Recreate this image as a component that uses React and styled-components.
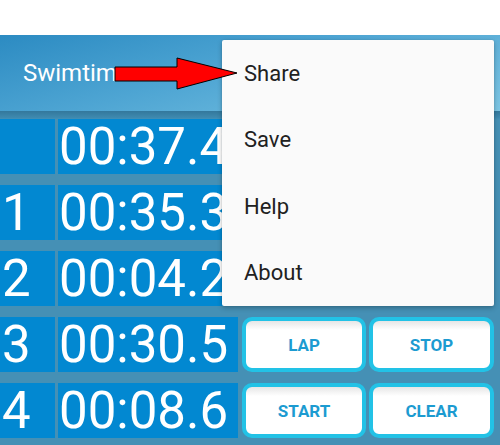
import styled, { createGlobalStyle } from "styled-components";

const GlobalStyle = createGlobalStyle`
  body {
    margin: 0;
    background: #fff;
    font-family: Roboto, "Liberation Sans", sans-serif;
  }
`;

const Screen = styled.div`
  position: relative;
  width: 500px;
  height: 445px;
  overflow: hidden;
  background: #fff;
`;

const StatusSpace = styled.div`
  height: 35px;
  background: #fff;
`;

const AppBar = styled.div`
  height: 76px;
  display: flex;
  align-items: center;
  padding-left: 23px;
  background: linear-gradient(165deg, #2c8bc2 0%, #4ea5d3 45%, #7cc5e3 100%);
  color: #fff;
  font-size: 24px;
`;

const Board = styled.div`
  display: flex;
  flex-direction: column;
  gap: 11px;
  padding-top: 8px;
  height: 334px;
  background: linear-gradient(#33789c 0px, #3f8ab0 7px, #4590b5 8px);
`;

const Row = styled.div`
  display: grid;
  grid-template-columns: 55px 180px 125px 125px;
  column-gap: 3px;
  height: 55px;
`;

const Cell = styled.div`
  background: #0288d1;
  color: #fff;
  font-size: 51px;
  line-height: 56px;
  overflow: hidden;
  white-space: nowrap;
  padding-left: ${(p) => (p.$label ? "2px" : "1px")};
`;

const ActionButton = styled.button`
  margin-left: ${(p) => (p.$first ? "1px" : "0")};
  border: 4px solid #22c2e6;
  border-radius: 10px;
  background: linear-gradient(#e6e6e6 0px, #fff 9px);
  color: #1c9bd1;
  font-family: Roboto, "Liberation Sans", sans-serif;
  font-size: 17px;
  font-weight: 700;
  padding: 0;
`;

const Menu = styled.div`
  position: absolute;
  top: 40px;
  left: 222px;
  width: 272px;
  background: #fafafa;
  border-radius: 2px;
  box-shadow: 0 2px 5px rgba(0, 0, 0, 0.25), 0 0 2px rgba(0, 0, 0, 0.12);
`;

const MenuItem = styled.div`
  height: 66.5px;
  display: flex;
  align-items: center;
  padding-left: 22px;
  font-size: 22px;
  color: #212121;
`;

const Arrow = styled.svg`
  position: absolute;
  left: 114px;
  top: 56px;
`;

const rows = [
  { label: "", time: "00:37.4", buttons: ["", ""] },
  { label: "1", time: "00:35.3", buttons: ["", ""] },
  { label: "2", time: "00:04.2", buttons: ["", ""] },
  { label: "3", time: "00:30.5", buttons: ["LAP", "STOP"] },
  { label: "4", time: "00:08.6", buttons: ["START", "CLEAR"] },
];

const menuItems = ["Share", "Save", "Help", "About"];

export default function App() {
  return (
    <Screen>
      <GlobalStyle />
      <StatusSpace />
      <AppBar>Swimtimer</AppBar>
      <Board>
        {rows.map((r, i) => (
          <Row key={i}>
            <Cell $label>{r.label}</Cell>
            <Cell>{r.time}</Cell>
            <ActionButton $first>{r.buttons[0]}</ActionButton>
            <ActionButton>{r.buttons[1]}</ActionButton>
          </Row>
        ))}
      </Board>
      <Menu>
        {menuItems.map((m) => (
          <MenuItem key={m}>{m}</MenuItem>
        ))}
      </Menu>
      <Arrow width="126" height="36" viewBox="0 0 126 36">
        <polygon
          points="1,11 63,11 63,2 123,17 63,33 63,25 1,25"
          fill="#ff0000"
          stroke="#000"
          strokeWidth="1"
        />
      </Arrow>
    </Screen>
  );
}
